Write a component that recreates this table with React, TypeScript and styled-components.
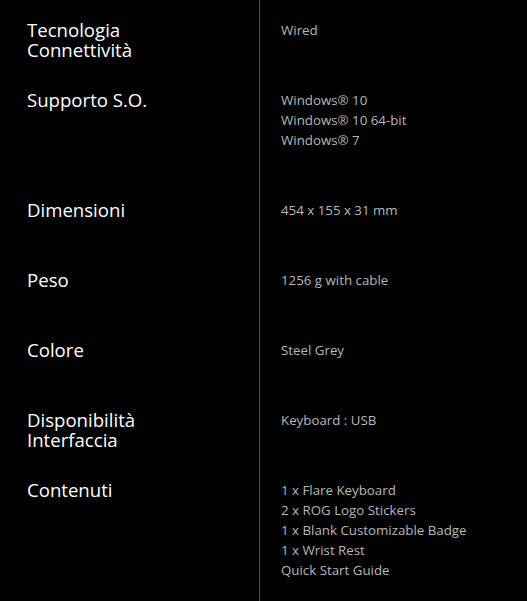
import React from "react";
import styled, { createGlobalStyle } from "styled-components";

const GlobalStyle = createGlobalStyle`
  html, body {
    margin: 0;
    padding: 0;
    background: #000;
  }
  body {
    font-family: "Open Sans", "Noto Sans", sans-serif;
  }
`;

const Table = styled.div`
  display: flex;
  flex-direction: column;
  background: #000;
  width: 527px;
`;

const Row = styled.div`
  display: grid;
  grid-template-columns: 260px 1fr;
`;

const Label = styled.div`
  box-sizing: border-box;
  border-right: 1px solid #4e4e4e;
  padding: 20px 0 10px 27px;
  color: #fff;
  font-size: 18.6px;
  line-height: 20px;
`;

const LabelLine = styled.div`
  white-space: nowrap;
`;

const Values = styled.div`
  padding: 20px 0 30px 21px;
  display: flex;
  flex-direction: column;
`;

const Value = styled.div`
  color: #b8b8b8;
  font-size: 13.3px;
  line-height: 20px;
`;

const specs: { label: string[]; values: string[] }[] = [
  { label: ["Tecnologia", "Connettività"], values: ["Wired"] },
  {
    label: ["Supporto S.O."],
    values: ["Windows® 10", "Windows® 10 64-bit", "Windows® 7"],
  },
  { label: ["Dimensioni"], values: ["454 x 155 x 31 mm"] },
  { label: ["Peso"], values: ["1256 g with cable"] },
  { label: ["Colore"], values: ["Steel Grey"] },
  { label: ["Disponibilità", "Interfaccia"], values: ["Keyboard : USB"] },
  {
    label: ["Contenuti"],
    values: [
      "1 x Flare Keyboard",
      "2 x ROG Logo Stickers",
      "1 x Blank Customizable Badge",
      "1 x Wrist Rest",
      "Quick Start Guide",
    ],
  },
];

export default function App() {
  return (
    <>
      <GlobalStyle />
      <Table>
        {specs.map((s, i) => (
          <Row key={i}>
            <Label>
              {s.label.map((l, j) => (
                <LabelLine key={j}>{l}</LabelLine>
              ))}
            </Label>
            <Values>
              {s.values.map((v, j) => (
                <Value key={j}>{v}</Value>
              ))}
            </Values>
          </Row>
        ))}
      </Table>
    </>
  );
}
